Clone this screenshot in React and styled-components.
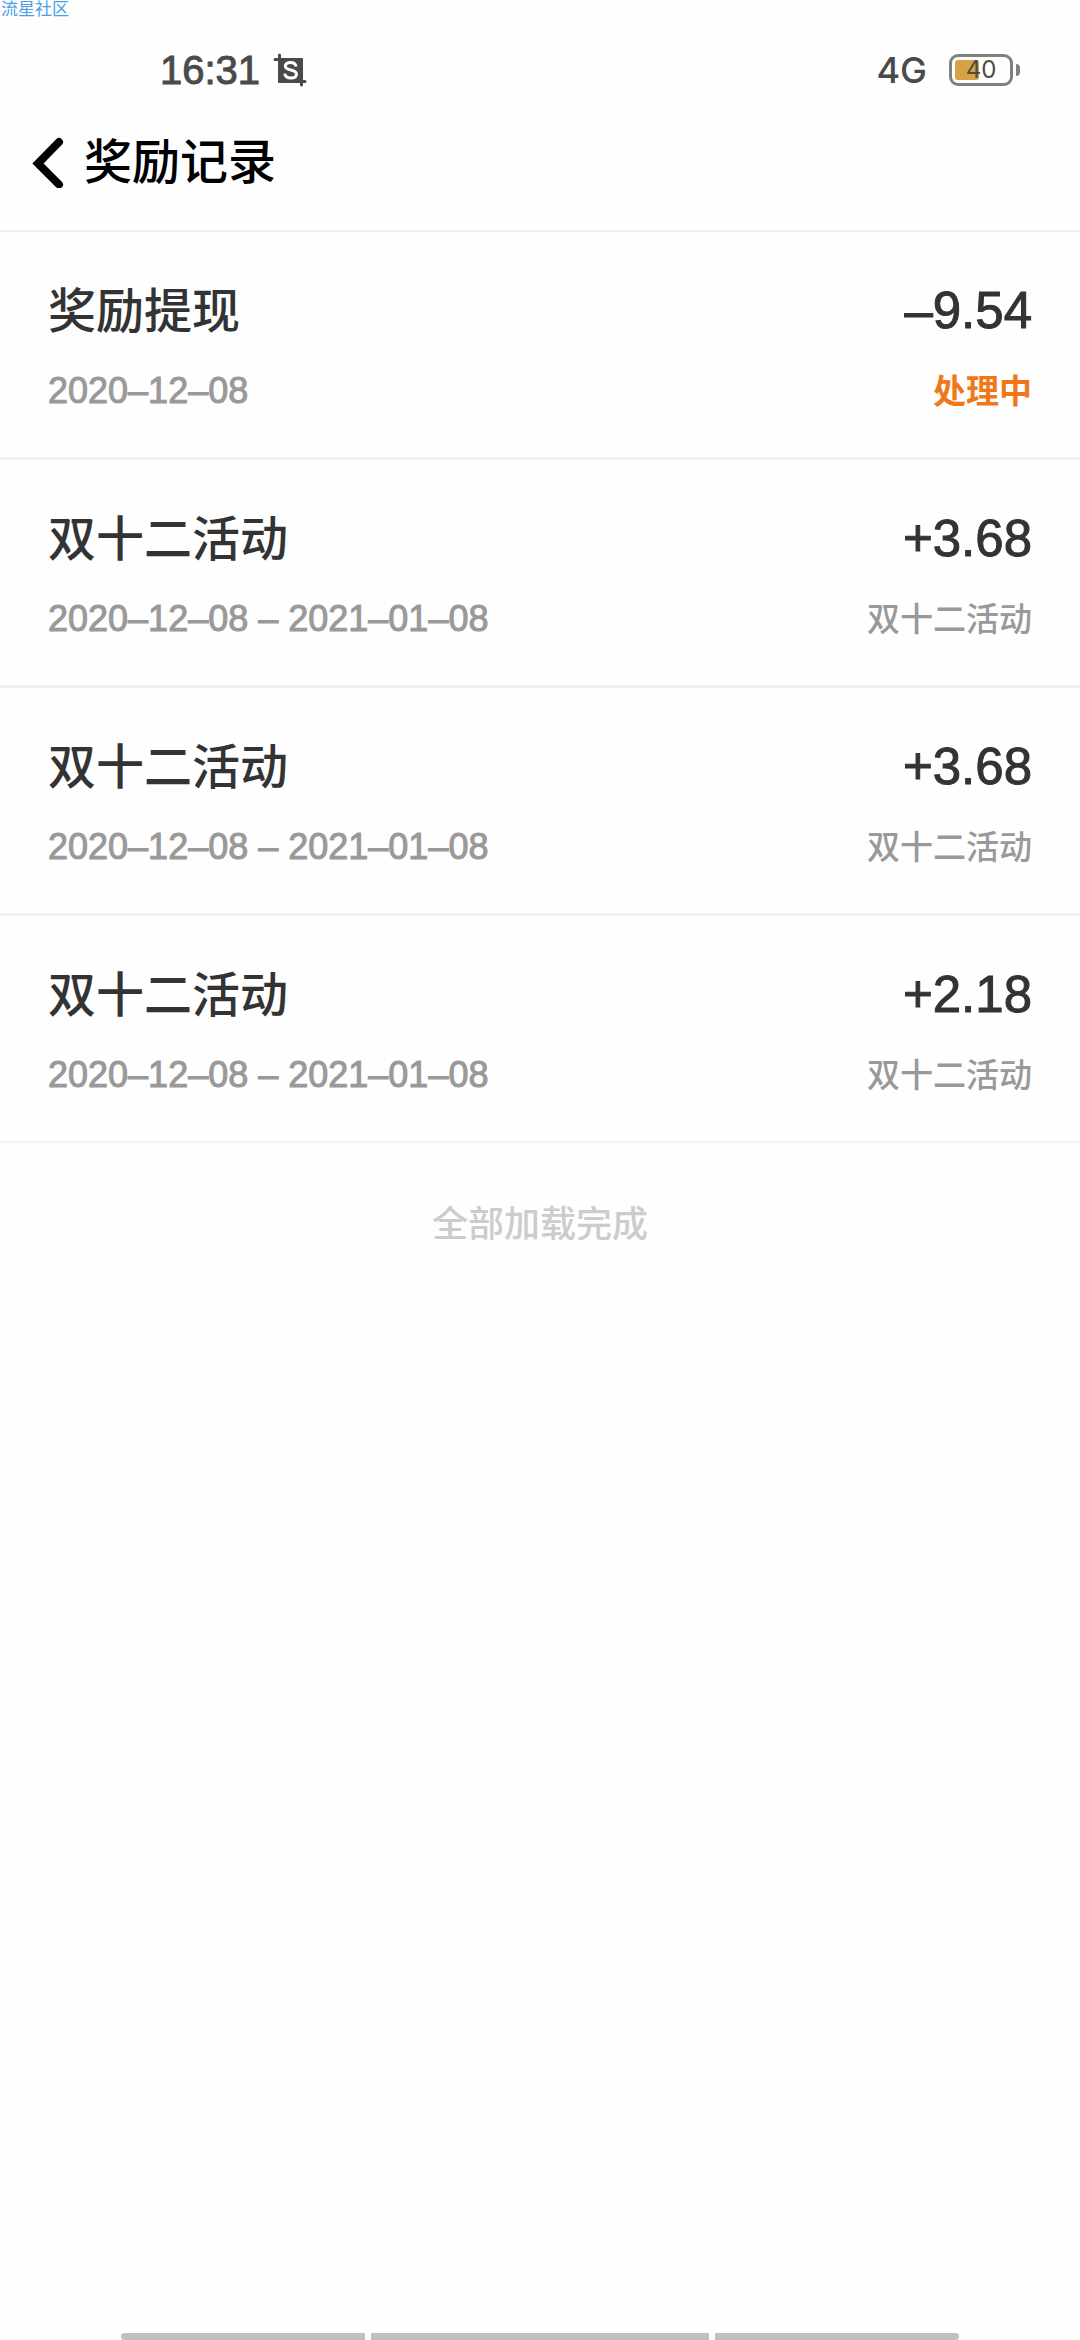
import React from 'react'
import styled, { createGlobalStyle } from 'styled-components';


const records = [
  { id: 1, title: '奖励提现', date: '2020–12–08', amount: '–9.54', memo: '处理中', pending: true },
  { id: 2, title: '双十二活动', date: '2020–12–08 – 2021–01–08', amount: '+3.68', memo: '双十二活动' },
  { id: 3, title: '双十二活动', date: '2020–12–08 – 2021–01–08', amount: '+3.68', memo: '双十二活动' },
  { id: 4, title: '双十二活动', date: '2020–12–08 – 2021–01–08', amount: '+2.18', memo: '双十二活动' },
]


function StatusBar() {
  return (
    <StatusWrap>
      <StatusGroup>
        <Clock>16:31</Clock>
        {/* screenshot icon */}
        <svg width="34" height="34" viewBox="0 0 34 34" aria-hidden="true">
          <rect x="5" y="5" width="25" height="25" rx="1" fill="#4a4a4a" />
          <path d="M2 6.500h5M6.500 2v5M27 28.500h5M28.500 26v6" stroke="#4a4a4a" strokeWidth="3" fill="none" strokeLinecap="round" />
          <path d="M23 13.500c-.4-2.600-2.500-4-5.500-4-3.200 0-5.200 1.500-5.200 3.800 0 4.700 11.200 2.800 11.200 7.700 0 2.500-2.400 4-5.700 4-3.500 0-5.700-1.500-6-4.400" stroke="#fff" strokeWidth="3" fill="none" />
        </svg>
      </StatusGroup>
      <StatusGroup>
        <Network>4G</Network>
        <Battery>
          <BatteryBody>
            <BatteryLevel />
            <BatteryText>40</BatteryText>
          </BatteryBody>
          <BatteryTip />
        </Battery>
      </StatusGroup>
    </StatusWrap>
  )
}

function Record({ data }) {
  return (
    <RecordItem>
      <RecordLine>
        <RecordTitle>{data.title}</RecordTitle>
        <Amount>{data.amount}</Amount>
      </RecordLine>
      <RecordLine>
        <RecordDate>{data.date}</RecordDate>
        <Memo $pending={data.pending}>{data.memo}</Memo>
      </RecordLine>
    </RecordItem>
  )
}

function App() {
  return (
    <Page>
      <GlobalStyle />
      <Watermark>流星社区</Watermark>
      <StatusBar />

      <Header>
        <BackButton type="button" aria-label="返回">
          <svg width="32" height="52" viewBox="0 0 32 52" aria-hidden="true">
            <path d="M27 6L6 27.500l21 21" stroke="#000" strokeWidth="8" fill="none" strokeLinecap="round" />
          </svg>
        </BackButton>
        <HeaderTitle>奖励记录</HeaderTitle>
      </Header>

      <RecordList>
        {records.map((data) => { return <Record data={data} key={data.id} /> })}
      </RecordList>

      <LoadDone>全部加载完成</LoadDone>

      {/* gesture bars */}
      <GestureNav>
        <GestureBar $side="left" />
        <GestureBar $wide />
        <GestureBar $side="right" />
      </GestureNav>
    </Page>
  );
}

const GlobalStyle = createGlobalStyle`
  * {
    box-sizing: border-box;
  }
  body {
    margin: 0;
    background: #fefefe;
    font-family: Inter, "Noto Sans CJK SC", sans-serif;
  }
`

const Page = styled.div`
  position: relative;
  display: flex;
  flex-direction: column;
  min-height: 100vh;
`

const Watermark = styled.span`
  position: absolute;
  top: 0;
  left: 1px;
  font-size: 17px;
  line-height: 18px;
  color: #4a9fe8;
`

const StatusWrap = styled.div`
  display: flex;
  justify-content: space-between;
  align-items: center;
  height: 104px;
  padding: 36px 60px 0 160px;
  color: #4a4a4a;
`

const StatusGroup = styled.div`
  display: flex;
  align-items: center;
`

// numbers with equal digit widths
const NumberText = styled.span`
  font-family: "Liberation Sans", Arial, sans-serif;
  -webkit-text-stroke: 1px currentColor;
`

const Clock = styled(NumberText)`
  margin-right: 13px;
  font-size: 40px;
  line-height: 48px;
`

const Network = styled.span`
  margin-right: 22px;
  font-size: 36px;
  line-height: 48px;
  font-weight: 500;
`

const Battery = styled.div`
  display: flex;
  align-items: center;
  gap: 3px;
`

const BatteryBody = styled.div`
  position: relative;
  display: flex;
  width: 64px;
  height: 32px;
  padding: 3px;
  border: 3px solid #808080;
  border-radius: 9px;
`

const BatteryLevel = styled.div`
  width: 46%;
  height: 20px;
  border-radius: 3px;
  background: #d6a344;
`

const BatteryText = styled.span`
  position: absolute;
  inset: 0;
  font-size: 24px;
  line-height: 26px;
  text-align: center;
`

const BatteryTip = styled.div`
  width: 4px;
  height: 12px;
  border-radius: 0 6px 6px 0;
  background: #808080;
`

const Header = styled.header`
  display: flex;
  align-items: center;
  height: 128px;
  padding: 0 32px 10px;
  border-bottom: 2px solid #f0f0f0;
`

const BackButton = styled.button`
  display: flex;
  margin-right: 20px;
  padding: 0;
  border: 0;
  background: none;
`

const HeaderTitle = styled.h1`
  margin: 0;
  font-size: 48px;
  line-height: 64px;
  font-weight: 500;
  color: #000;
`

const RecordList = styled.ul`
  margin: 0;
  padding: 0;
  list-style: none;
`

const RecordItem = styled.li`
  display: flex;
  flex-direction: column;
  gap: 24px;
  height: 228px;
  padding: 47px 48px 0;
  border-bottom: 3px solid #f0f0f0;

  &:last-child {
    height: 227px;
    border-bottom: 2px solid #f4f4f4;
  }
`

const RecordLine = styled.div`
  display: flex;
  justify-content: space-between;
  align-items: center;
`

const RecordTitle = styled.span`
  font-size: 48px;
  line-height: 64px;
  font-weight: 500;
  color: #333;
`

const Amount = styled(NumberText)`
  font-size: 51px;
  line-height: 64px;
  color: #333;
`

const RecordDate = styled(NumberText)`
  font-size: 36px;
  line-height: 48px;
  color: #999;
`

const Memo = styled.span`
  font-size: 33px;
  line-height: 48px;
  font-weight: ${(props) => (props.$pending ? 700 : 500)};
  color: ${(props) => (props.$pending ? '#f07818' : '#999')};
`

const LoadDone = styled.p`
  margin: 54px 0 0;
  font-size: 36px;
  line-height: 54px;
  font-weight: 500;
  text-align: center;
  color: #ccc;
`

const GestureNav = styled.div`
  display: flex;
  gap: 6px;
  margin-top: auto;
  padding: 0 121px;
`

const GestureBar = styled.div`
  flex: ${(props) => (props.$wide ? 338 : 244)};
  height: 7px;
  border-radius: ${(props) => (props.$side === 'left' ? '4px 0 0 4px' : props.$side === 'right' ? '0 4px 4px 0' : '0')};
  background: #c0c0c0;
`

export default App
